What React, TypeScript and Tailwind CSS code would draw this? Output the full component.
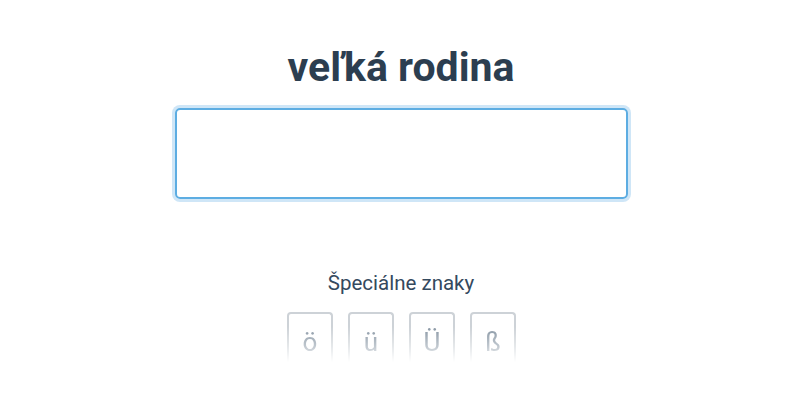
import React from "react";

export default function App() {
  const chars = ["ö", "ü", "Ü", "ß"];
  return (
    <div
      className="w-[800px] h-[400px] bg-white flex flex-col items-center overflow-hidden"
      style={{ fontFamily: "Roboto, 'Liberation Sans', sans-serif" }}
    >
      <h1 className="mt-[41px] text-[41px] leading-[52px] font-bold text-[#2c3e50] ml-[2px]">veľká rodina</h1>
      <div className="mt-[15px] w-[453px] h-[91px] rounded-[5px] border-2 border-[#5dade2] ring-[3px] ring-[#cfe6f7] ml-[2px]" />
      <div className="mt-[70px] text-[20.5px] leading-[28px] text-[#34495e] ml-[2px]">Špeciálne znaky</div>
      <div className="mt-[15px] ml-[3px] flex gap-[15px] [mask-image:linear-gradient(to_bottom,black_30%,rgba(0,0,0,0.5)_70%,transparent_100%)]">
        {chars.map((c) => (
          <div
            key={c}
            className="w-[46px] h-[50px] border-2 border-b-0 border-[#cdd2d7] rounded-t-[4px] flex items-end justify-center pb-[5px] text-[26px] leading-[30px] text-[#8795a3]"
          >
            {c}
          </div>
        ))}
      </div>
    </div>
  );
}
